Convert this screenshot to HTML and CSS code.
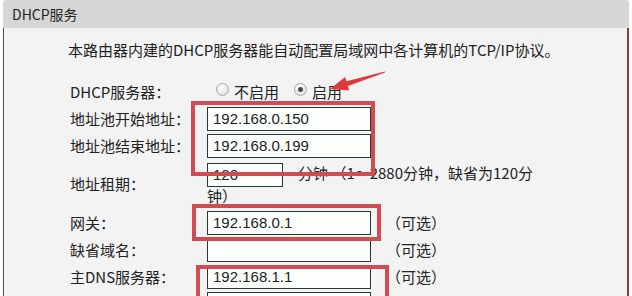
FILE: index.html
```html
<!DOCTYPE html>
<html>
<head>
  <title>DHCP服务</title>
  <link rel="stylesheet" href="styles.css">
</head>
<body>

  <div class="panel">
    <div class="panel-head">DHCP服务</div>

    <div class="panel-body">
      <p class="intro">本路由器内建的DHCP服务器能自动配置局域网中各计算机的TCP/IP协议。</p>

      <div class="form">
        <div class="row row-radio">
          <span class="label">DHCP服务器：</span>
          <span class="field">
            <span class="radio"></span><span class="radio-text">不启用</span>
            <span class="radio checked"></span><span class="radio-text">启用</span>
          </span>
        </div>

        <div class="row">
          <span class="label">地址池开始地址：</span>
          <span class="field"><input class="text-input" type="text" value="192.168.0.150"></span>
        </div>

        <div class="row">
          <span class="label">地址池结束地址：</span>
          <span class="field"><input class="text-input" type="text" value="192.168.0.199"></span>
        </div>

        <div class="row row-lease">
          <span class="label">地址租期：</span>
          <span class="field lease"><input class="text-input short" type="text" value="120"><span class="unit">分钟</span> （1～2880分钟，缺省为120分钟）</span>
        </div>

        <div class="row">
          <span class="label">网关：</span>
          <span class="field"><input class="text-input" type="text" value="192.168.0.1"><span class="note">（可选）</span></span>
        </div>

        <div class="row">
          <span class="label">缺省域名：</span>
          <span class="field"><input class="text-input" type="text" value=""><span class="note">（可选）</span></span>
        </div>

        <div class="row">
          <span class="label">主DNS服务器：</span>
          <span class="field"><input class="text-input" type="text" value="192.168.1.1"><span class="note">（可选）</span></span>
        </div>

        <!-- next row is cut by the bottom edge, only its box shows -->
        <div class="row">
          <span class="label"></span>
          <span class="field"><input class="text-input" type="text" value=""></span>
        </div>
      </div>
    </div>

    <!-- annotations drawn over the form -->
    <div class="mark mark-pool"></div>
    <div class="mark mark-gateway"></div>
    <div class="mark mark-dns"></div>

    <svg class="arrow" width="75" height="34" viewBox="0 0 75 34">
      <polygon points="10,27 29.3,28.4 27.9,24.1 65.1,10.5 64.9,9.5 26.5,19.3 25.1,15" fill="#de3b3d"/>
    </svg>
  </div>

</body>
</html>
```

FILE: styles.css
```css
body {
  margin: 0;
  background: #fff;
  color: #222;
  font-family: "Noto Sans CJK SC", sans-serif;
  font-size: 15px;
  overflow: hidden;
}

.panel {
  position: relative;
  margin-left: 3px;
  width: 626px;
  height: 296px;
}

.panel-head {
  height: 28px;
  line-height: 28px;
  padding-left: 9px;
  background: #d6d6d6;
  border-radius: 3px 3px 0 0;
  font-size: 14px;
  color: #222;
}

.panel-body {
  height: 268px;
  padding-left: 64px;
  background: #f3f3f3;
  border-left: 1px solid #8c3b3b;
  border-right: 2px solid #8c3b3b;
  overflow: hidden;
}

.intro {
  margin: 12px 0 19px;
  line-height: 20px;
}

.form {
  margin-left: 2px;
}

.row {
  display: flex;
  align-items: center;
  min-height: 27px;
}

.row-radio {
  min-height: 26px;
}

.row-lease {
  min-height: 50px;
}

.label {
  width: 137px;
  flex: none;
  line-height: 20px;
}

.field {
  display: flex;
  align-items: center;
}

.radio {
  width: 13px;
  height: 13px;
  margin: -6px 5px 0 9px;
  box-sizing: border-box;
  border: 1px solid #a9a9a9;
  border-radius: 50%;
  background: radial-gradient(circle at 40% 35%, #ffffff, #d9d9d9);
  position: relative;
}

.radio.checked {
  margin-left: 15px;
}

.radio.checked::after {
  content: "";
  position: absolute;
  left: 3px;
  top: 3px;
  width: 5px;
  height: 5px;
  border-radius: 50%;
  background: #4a4a4a;
}

.radio-text {
  line-height: 20px;
}

.text-input {
  width: 164px;
  height: 24px;
  box-sizing: border-box;
  margin: 0;
  padding: 0 5px;
  border: 1px solid #213a3a;
  background: #fcfffc;
  font-family: "Liberation Sans", sans-serif;
  font-size: 15px;
  color: #222;
  outline: none;
}

.text-input.short {
  width: 76px;
}

.note {
  margin-left: 15px;
  line-height: 20px;
}

.lease {
  display: block;
  width: 345px;
  line-height: 21px;
}

.lease .text-input {
  vertical-align: middle;
  margin: -2px 0;
}

.unit {
  margin-left: 15px;
}

.mark {
  position: absolute;
  border: 4px solid #d14b52;
  box-sizing: border-box;
}

.mark-pool {
  left: 188px;
  top: 101px;
  width: 184px;
  height: 75px;
}

.mark-gateway {
  left: 189px;
  top: 204px;
  width: 189px;
  height: 37px;
}

.mark-dns {
  left: 193px;
  top: 265px;
  width: 193px;
  height: 40px;
}

.arrow {
  position: absolute;
  left: 317px;
  top: 62px;
}
```
